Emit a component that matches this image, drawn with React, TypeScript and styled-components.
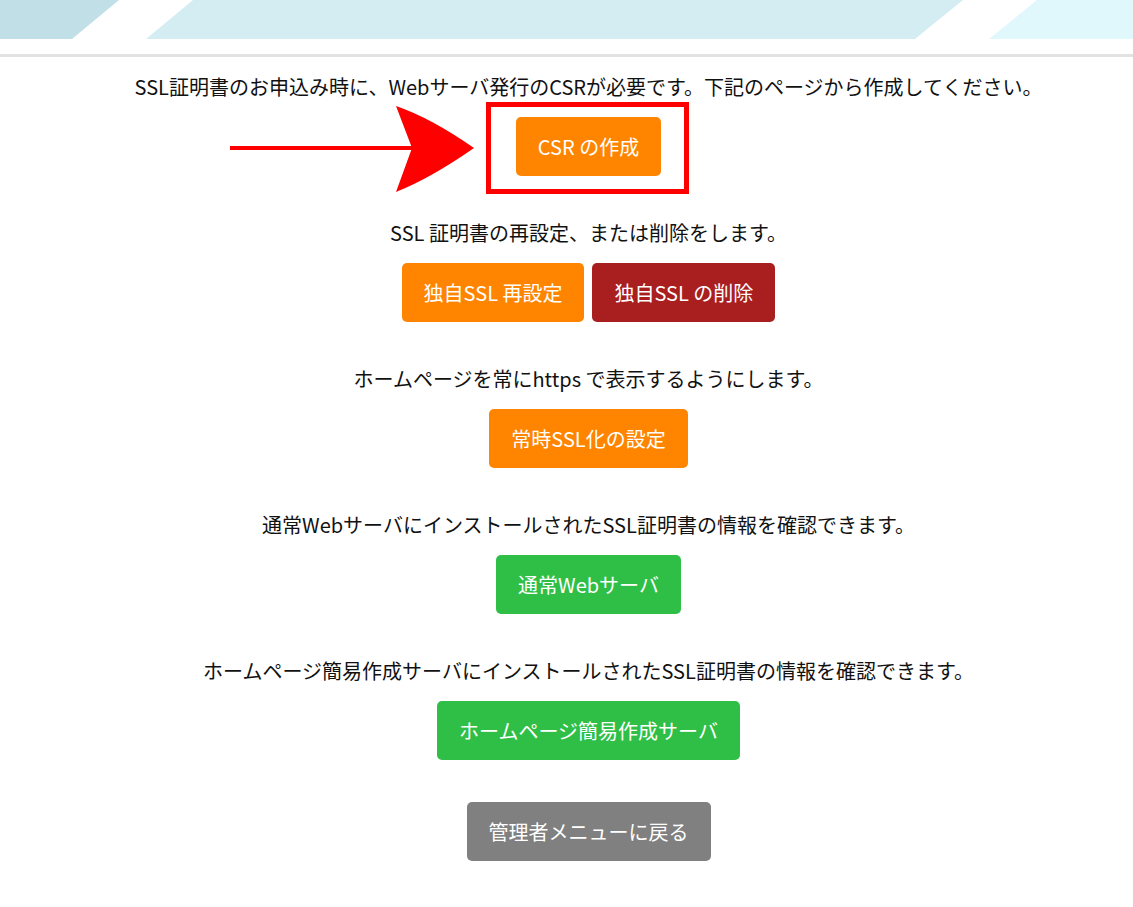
import React from 'react'
import styled, { createGlobalStyle } from 'styled-components'

const GlobalStyle = createGlobalStyle`
  body {
    margin: 0;
    background: #fff;
    font-family: 'Noto Sans CJK JP', 'Noto Sans', sans-serif;
  }
`

const Banner = styled.header`
  height: 54px;
  border-bottom: 3px solid #e2e2e2;

  svg {
    display: block;
    width: 100%;
    height: 39px;
  }
`

const Main = styled.main`
  display: flex;
  flex-direction: column;
  align-items: center;
  gap: 42px;
  padding: 15px 0 40px 44px;
`

const Section = styled.section`
  display: flex;
  flex-direction: column;
  align-items: center;
  gap: 15px;
`

const Lead = styled.p`
  margin: 0;
  font-size: 20px;
  line-height: 30px;
  color: #111;
  white-space: nowrap;
`

const ButtonRow = styled.div`
  display: flex;
  gap: 8px;
`

const tones = {
  orange: '#ff8500',
  red: '#a91e1f',
  green: '#2fbf47',
  gray: '#808080',
}

type Tone = keyof typeof tones

const Button = styled.button<{ $tone: Tone }>`
  font-family: inherit;
  font-size: 20px;
  line-height: 29px;
  padding: 15px 22px;
  border: 0;
  border-radius: 5px;
  color: #fff;
  background: ${p => tones[p.$tone]};
  cursor: pointer;
  white-space: nowrap;
`

const Highlight = styled.div`
  position: relative;
`

const RedFrame = styled.span`
  position: absolute;
  left: -30px;
  top: -15px;
  right: -28px;
  bottom: -18px;
  border: 5px solid #ff0000;
  pointer-events: none;
`

const ArrowMark = styled.svg`
  position: absolute;
  left: -290px;
  top: -15px;
  width: 250px;
  height: 95px;
  pointer-events: none;
`

const sections: { lead: string; buttons: { label: string; tone: Tone }[] }[] = [
  {
    lead: 'SSL 証明書の再設定、または削除をします。',
    buttons: [
      { label: '独自SSL 再設定', tone: 'orange' },
      { label: '独自SSL の削除', tone: 'red' },
    ],
  },
  {
    lead: 'ホームページを常にhttps で表示するようにします。',
    buttons: [{ label: '常時SSL化の設定', tone: 'orange' }],
  },
  {
    lead: '通常Webサーバにインストールされた SSL証明書の情報を確認できます。'.replace(' ', ''),
    buttons: [{ label: '通常Webサーバ', tone: 'green' }],
  },
  {
    lead: 'ホームページ簡易作成サーバにインストールされたSSL証明書の情報を確認できます。',
    buttons: [{ label: 'ホームページ簡易作成サーバ', tone: 'green' }],
  },
]

const App: React.FC = () => {
  return (
    <>
      <GlobalStyle />
      <Banner>
        <svg viewBox='0 0 1133 39' preserveAspectRatio='none'>
          <polygon points='0,0 119,0 72,39 0,39' fill='#c1dfe7' />
          <polygon points='193,0 963,0 915,39 146,39' fill='#d4edf3' />
          <polygon points='1037,0 1133,0 1133,39 989,39' fill='#e0f7fc' />
        </svg>
      </Banner>
      <Main>
        <Section>
          <Lead>SSL証明書のお申込み時に、Webサーバ発行のCSRが必要です。下記のページから作成してください。</Lead>
          <Highlight>
            <Button $tone='orange'>CSR の作成</Button>
            <RedFrame />
            <ArrowMark viewBox='0 0 250 95'>
              <rect x='4' y='44' width='184' height='4' fill='#ff0000' />
              <path d='M170 4 Q205 16 248 46 Q205 76 170 90 L186 46 Z' fill='#ff0000' />
            </ArrowMark>
          </Highlight>
        </Section>
        {sections.map(({ lead, buttons }) => (
          <Section key={lead}>
            <Lead>{lead}</Lead>
            <ButtonRow>
              {buttons.map(({ label, tone }) => (
                <Button key={label} $tone={tone}>{label}</Button>
              ))}
            </ButtonRow>
          </Section>
        ))}
        <Button $tone='gray'>管理者メニューに戻る</Button>
      </Main>
    </>
  )
}

export default App
